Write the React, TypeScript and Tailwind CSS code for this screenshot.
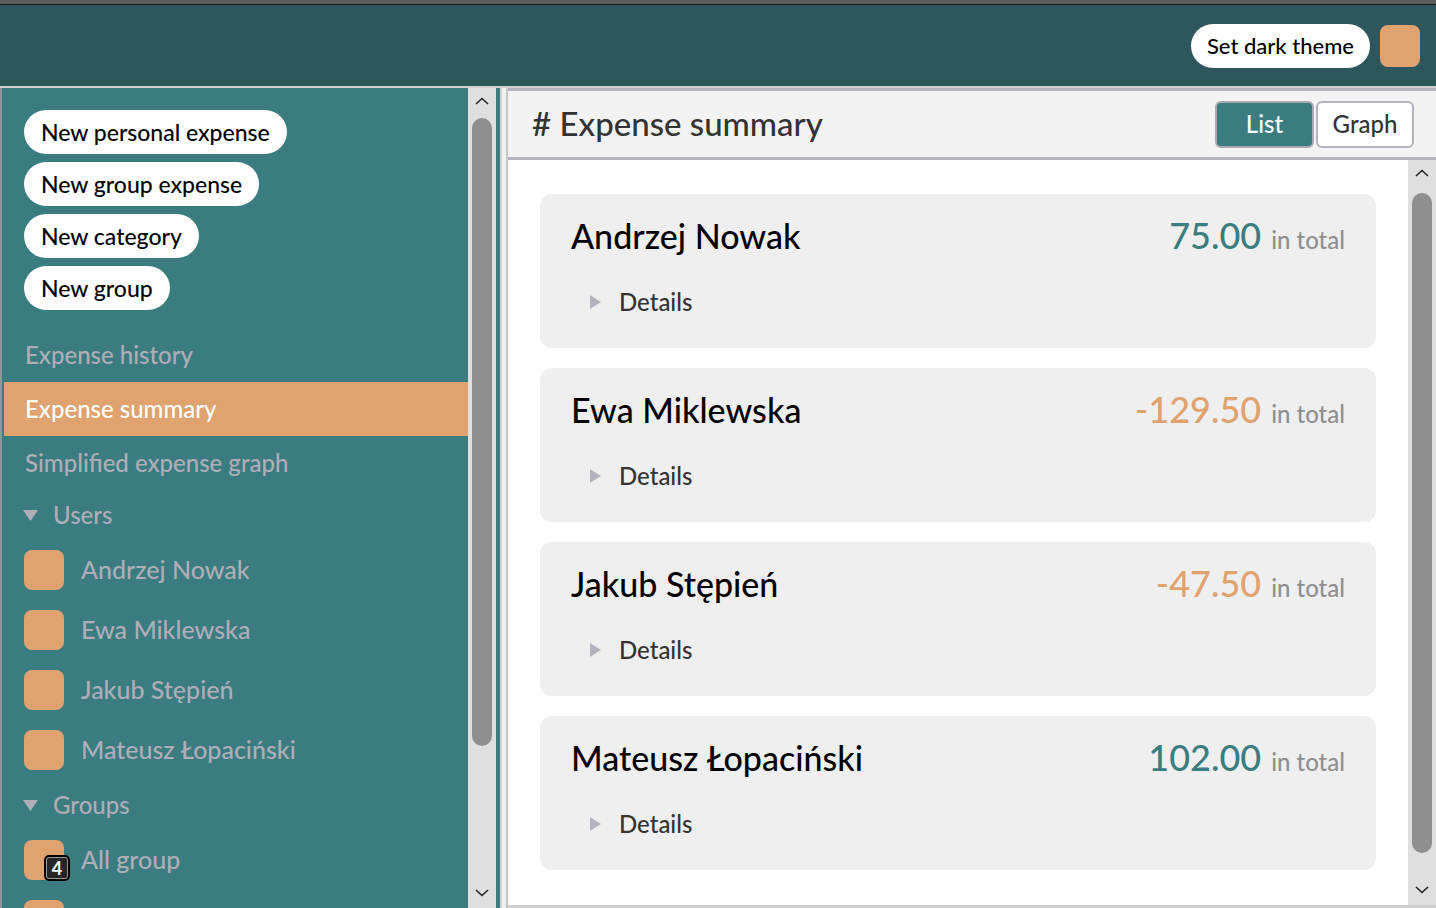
const users = ["Andrzej Nowak", "Ewa Miklewska", "Jakub Stępień", "Mateusz Łopaciński"];

const summary = [
  { name: "Andrzej Nowak", amount: "75.00", positive: true },
  { name: "Ewa Miklewska", amount: "-129.50", positive: false },
  { name: "Jakub Stępień", amount: "-47.50", positive: false },
  { name: "Mateusz Łopaciński", amount: "102.00", positive: true },
];

function Chevron({ up }: { up?: boolean }) {
  return (
    <svg width="14" height="8" viewBox="0 0 14 8" className="shrink-0">
      <polyline
        points={up ? "1,7 7,1.5 13,7" : "1,1 7,6.5 13,1"}
        fill="none"
        stroke="#222"
        strokeWidth="1.6"
      />
    </svg>
  );
}

function Scrollbar({ thumb }: { thumb: string }) {
  return (
    <div className="w-[28px] shrink-0 bg-[#dfdfdf] flex flex-col items-center">
      <div className="h-[26px] flex items-center justify-center">
        <Chevron up />
      </div>
      <div className="flex-1 w-full flex flex-col px-[4px]">
        <div className={thumb} />
      </div>
      <div className="h-[30px] flex items-center justify-center">
        <Chevron />
      </div>
    </div>
  );
}

function Triangle({ down }: { down?: boolean }) {
  return down ? (
    <svg width="15" height="11" viewBox="0 0 15 11">
      <polygon points="0,0 15,0 7.5,11" fill="#aeaeb9" />
    </svg>
  ) : (
    <svg width="11" height="14" viewBox="0 0 11 14">
      <polygon points="0,0 11,7 0,14" fill="#b4b3bd" />
    </svg>
  );
}

export default function App() {
  return (
    <div className="w-[1436px] h-[908px] overflow-hidden flex flex-col bg-[#cfcfcf] font-['Lato',sans-serif]">
      {/* window frame top */}
      <div className="h-[5px] shrink-0 bg-[#5d5d5d] border-b border-[#1c1c1c]" />

      {/* header */}
      <header className="h-[81px] shrink-0 bg-[#2d565d] flex items-center justify-end gap-[10px] pr-[16px]">
        <button className="h-[44px] px-[16px] rounded-full bg-white text-black text-[22px] font-medium">
          Set dark theme
        </button>
        <div className="w-[40px] h-[42px] rounded-lg bg-[#e0a26f]" />
      </header>

      <div className="h-[2px] shrink-0 bg-[#cfcfcf]" />

      <div className="flex flex-1 min-h-0">
        {/* sidebar */}
        <aside className="w-[500px] shrink-0 flex bg-[#3b7c80] pl-[2px] border-l-2 border-[#8a9a9b]">
          <div className="flex-1 overflow-hidden flex flex-col">
            <div className="flex flex-col items-start gap-[8px] px-[20px] pt-[22px]">
              {["New personal expense", "New group expense", "New category", "New group"].map((t) => (
                <button
                  key={t}
                  className="h-[44px] px-[17px] rounded-full bg-white text-black text-[23px] font-medium"
                >
                  {t}
                </button>
              ))}
            </div>

            <nav className="mt-[18px] flex flex-col text-[24px] text-[#aeaeb9] font-medium">
              <div className="h-[54px] flex items-center pl-[21px]">Expense history</div>
              <div className="h-[54px] flex items-center pl-[21px] bg-[#e0a26f] text-white">Expense summary</div>
              <div className="h-[54px] flex items-center pl-[21px]">Simplified expense graph</div>
              <div className="h-[50px] flex items-center gap-[15px] pl-[19px]">
                <Triangle down />
                <span>Users</span>
              </div>
              {users.map((u) => (
                <div key={u} className="h-[60px] flex items-center gap-[17px] pl-[20px]">
                  <div className="w-[40px] h-[40px] rounded-lg bg-[#e0a26f] shrink-0" />
                  <span className="text-[25px]">{u}</span>
                </div>
              ))}
              <div className="h-[50px] flex items-center gap-[15px] pl-[19px]">
                <Triangle down />
                <span>Groups</span>
              </div>
              <div className="h-[60px] flex items-center gap-[17px] pl-[20px]">
                <div className="relative w-[40px] h-[40px] rounded-lg bg-[#e0a26f] shrink-0">
                  <div className="absolute left-[20px] top-[15px] w-[26px] h-[26px] rounded-[5px] bg-[#262626] border-2 border-black outline outline-1 outline-[#9a9a9a] -outline-offset-[3px] flex items-center justify-center text-white text-[18px] font-bold leading-none">
                    4
                  </div>
                </div>
                <span className="text-[25px]">All group</span>
              </div>
              <div className="h-[60px] flex items-start pl-[20px] pt-[10px]">
                <div className="w-[40px] h-[40px] rounded-lg bg-[#e0a26f]" />
              </div>
            </nav>
          </div>
          <Scrollbar thumb="mt-[4px] h-[628px] rounded-full bg-[#8f8f8f]" />
          <div className="w-[4px] shrink-0 bg-[#3b7c80]" />
        </aside>

        {/* divider */}
        <div className="w-[2px] shrink-0 bg-[#d3d3d3]" />
        <div className="w-[4px] shrink-0 bg-[#efefef]" />
        <div className="w-[2px] shrink-0 bg-[#c6c6c6]" />

        {/* main */}
        <main className="flex-1 min-w-0 flex flex-col bg-white">
          <div className="h-[72px] shrink-0 bg-[#f3f3f3] border-y-[3px] border-[#b4b3bd] flex items-center justify-between pl-[24px] pr-[22px]">
            <h1 className="text-[33px] text-[#333] font-medium"># Expense summary</h1>
            <div className="flex gap-[2px]">
              <button className="w-[99px] h-[47px] rounded-md bg-[#3b7c80] border-2 border-[#a9aab3] text-white text-[24px] font-medium">
                List
              </button>
              <button className="w-[98px] h-[47px] rounded-md bg-white border-2 border-[#b4b3bd] text-[#333] text-[24px] font-medium">
                Graph
              </button>
            </div>
          </div>

          <div className="flex flex-1 min-h-0">
            <div className="flex-1 overflow-hidden flex flex-col gap-[20px] pl-[32px] pr-[32px] pt-[34px]">
              {summary.map((s) => (
                <div key={s.name} className="h-[154px] shrink-0 rounded-xl bg-[#efefef] px-[31px] pt-[14px]">
                  <div className="flex items-baseline justify-between">
                    <span className="text-[34px] text-black font-medium leading-[48px]">{s.name}</span>
                    <span className="flex items-baseline gap-[10px]">
                      <span
                        className={
                          s.positive
                            ? "text-[36px] text-[#3b7c80] font-medium"
                            : "text-[36px] text-[#e0a26f] font-medium"
                        }
                      >
                        {s.amount}
                      </span>
                      <span className="text-[24px] text-[#8f8f8f] font-medium">in total</span>
                    </span>
                  </div>
                  <div className="mt-[24px] flex items-center gap-[18px] pl-[19px]">
                    <Triangle />
                    <span className="text-[24px] text-[#333] font-medium leading-[32px]">Details</span>
                  </div>
                </div>
              ))}
            </div>
            <Scrollbar thumb="mt-[7px] h-[660px] rounded-full bg-[#8f8f8f]" />
          </div>
          <div className="h-[3px] shrink-0 bg-[#cfcfcf]" />
        </main>
      </div>
    </div>
  );
}
